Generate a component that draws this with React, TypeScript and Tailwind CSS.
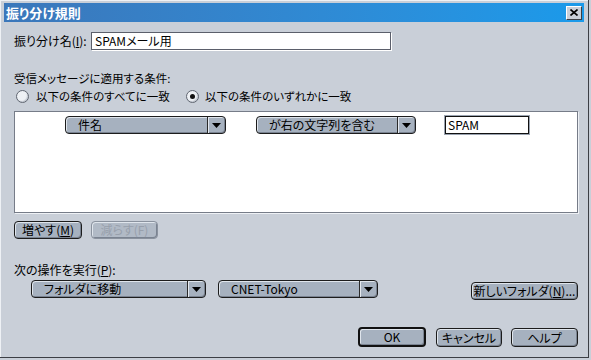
import React from "react";

const font = {
  fontFamily: '"Noto Sans CJK JP", "Noto Sans", sans-serif',
  fontFeatureSettings: '"palt"',
};

function Arrow() {
  return (
    <svg width="9" height="5" viewBox="0 0 9 5">
      <polygon points="0,0 9,0 4.5,5" fill="#000" />
    </svg>
  );
}

function Combo({ w, text }: { w: string; text: string }) {
  return (
    <div
      className={`${w} h-[18px] flex rounded-[4px] border border-[#1c1c1c] bg-[#a6b1bf] shadow-[inset_1px_1px_0_#dfe5ec,inset_-1px_-1px_0_#7a8391] overflow-hidden`}
    >
      <div className="flex-1 flex items-center pl-[12px] text-[12px] leading-[14px] text-black whitespace-nowrap">
        {text}
      </div>
      <div className="w-[18px] flex items-center justify-center border-l border-[#2a2a2a] shadow-[inset_1px_0_0_#e4e9ef]">
        <Arrow />
      </div>
    </div>
  );
}

function Button({
  w,
  children,
  disabled,
  def,
  h = "h-[18px]",
}: {
  w: string;
  children: React.ReactNode;
  disabled?: boolean;
  def?: boolean;
  h?: string;
}) {
  const border = def
    ? "border-2 border-[#111]"
    : disabled
    ? "border border-[#8a929e]"
    : "border border-[#1c1c1c]";
  const color = disabled ? "text-[#98a0ac] bg-[#b1bac6]" : "text-black bg-[#a6b1bf]";
  return (
    <div
      className={`${w} ${h} ${border} ${color} rounded-[4px] flex items-center justify-center text-[12px] leading-[14px] whitespace-nowrap shadow-[inset_1px_1px_0_#dfe5ec,inset_-1px_-1px_0_#7a8391]`}
    >
      {children}
    </div>
  );
}

function Radio({ checked }: { checked?: boolean }) {
  return (
    <div className="w-[13px] h-[13px] rounded-full border border-[#5f6570] bg-[#eef1f5] shadow-[inset_-1px_-1px_1px_#c3c9d2] flex items-center justify-center">
      {checked && <div className="w-[5px] h-[5px] rounded-full bg-[#111]" />}
    </div>
  );
}

export default function App() {
  return (
    <div className="w-[591px] h-[360px] bg-[#c9cfd8]" style={font}>
      <div className="w-[589px] h-[358px] flex flex-col border-r border-b border-[#3c3f45] shadow-[inset_1px_1px_0_#eef1f5]">
        {/* Title bar */}
        <div className="mx-[4px] mt-[3px] h-[19px] flex items-center justify-between bg-gradient-to-r from-[#3b77ba] to-[#1a9aea]">
          <span className="pl-[2px] text-white font-bold text-[13px] leading-[15px]">振り分け規則</span>
          <div className="mr-[2px] w-[16px] h-[14px] bg-[#c9cfd8] border border-t-white border-l-white border-r-[#3c3f45] border-b-[#3c3f45] flex items-center justify-center">
            <svg width="8" height="7" viewBox="0 0 8 7">
              <path d="M0.5 0.5 L7.5 6.5 M7.5 0.5 L0.5 6.5" stroke="#000" strokeWidth="1.6" />
            </svg>
          </div>
        </div>

        <div className="pl-[14px] flex flex-col">
          {/* Name row */}
          <div className="mt-[10px] flex items-center h-[18px]">
            <span className="w-[77px] text-[12px] leading-[14px] text-black whitespace-nowrap">
              振り分け名(<u>I</u>):
            </span>
            <div className="w-[300px] h-[18px] bg-white border border-[#5b5f6b] shadow-[1px_1px_0_#ffffff] flex items-center pl-[3px] text-[12px] leading-[14px] text-black">
              SPAMメール用
            </div>
          </div>

          {/* Conditions */}
          <div className="mt-[21px] text-[11.5px] leading-[14px] text-black">受信メッセージに適用する条件:</div>
          <div className="mt-[4px] ml-[2px] flex items-center h-[14px] text-[11.5px] leading-[14px] text-black">
            <Radio />
            <span className="ml-[7px] w-[150px]">以下の条件のすべてに一致</span>
            <Radio checked />
            <span className="ml-[6px]">以下の条件のいずれかに一致</span>
          </div>

          {/* List box */}
          <div className="mt-[8px] w-[564px] h-[102px] bg-white border border-[#767c88] shadow-[1px_1px_0_#eef1f5]">
            <div className="pt-[4px] pl-[50px] flex items-center">
              <Combo w="w-[161px]" text="件名" />
              <div className="ml-[30px]">
                <Combo w="w-[160px]" text="が右の文字列を含む" />
              </div>
              <div className="ml-[29px] w-[84px] h-[18px] border border-[#111] shadow-[0_0_0_1px_#9aa3b0] flex items-center pl-[2px] text-[12px] leading-[14px] text-black">
                SPAM
              </div>
            </div>
          </div>

          {/* add/remove */}
          <div className="mt-[8px] flex items-center">
            <Button w="w-[68px]">
              増やす(<u>M</u>)
            </Button>
            <div className="ml-[9px]">
              <Button w="w-[67px]" disabled>
                減らす(F)
              </Button>
            </div>
          </div>

          {/* Action */}
          <div className="mt-[24px] text-[12px] leading-[14px] text-black">
            次の操作を実行(<u>P</u>):
          </div>
          <div className="mt-[3px] flex items-start">
            <div className="ml-[17px]">
              <Combo w="w-[175px]" text="フォルダに移動" />
            </div>
            <div className="ml-[12px]">
              <Combo w="w-[160px]" text="CNET-Tokyo" />
            </div>
            <div className="ml-[93px] mt-[2px]">
              <Button w="w-[107px]">
                新しいフォルダ(<u>N</u>)...
              </Button>
            </div>
          </div>

          {/* Bottom buttons */}
          <div className="mt-[27px] flex items-end">
            <div className="ml-[344px]">
              <Button w="w-[68px]" h="h-[20px]" def>
                OK
              </Button>
            </div>
            <div className="ml-[10px]">
              <Button w="w-[66px]" h="h-[19px]">
                キャンセル
              </Button>
            </div>
            <div className="ml-[9px]">
              <Button w="w-[67px]" h="h-[19px]">
                ヘルプ
              </Button>
            </div>
          </div>
        </div>
      </div>
    </div>
  );
}
